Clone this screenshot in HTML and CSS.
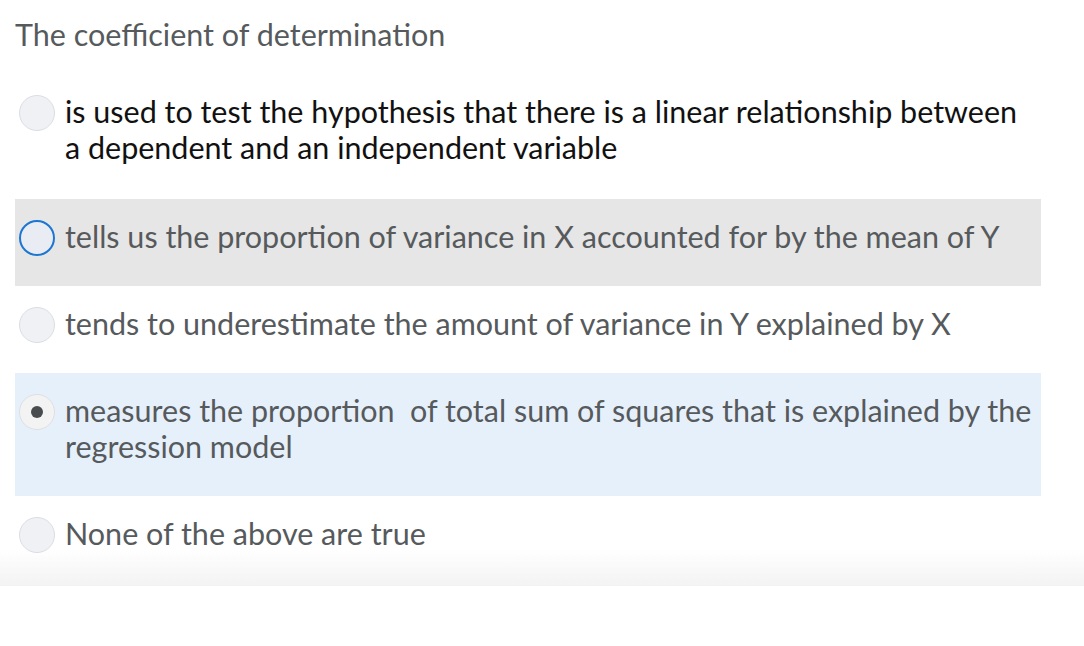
FILE: index.html
```html
<!DOCTYPE html>
<html lang="en">
<head>
<meta charset="utf-8">
<title>Quiz question</title>
<link rel="stylesheet" href="styles.css">
</head>
<body>
<div class="question">
  <h1 class="prompt">The coefficient of determination</h1>
  <ul class="options">
    <li class="option option-dark">
      <span class="radio"></span>
      <span class="label">is used to test the hypothesis that there is a linear relationship between a dependent and an independent variable</span>
    </li>
    <li class="option option-hover">
      <span class="radio radio-focus"></span>
      <span class="label">tells us the proportion of variance in X accounted for by the mean of Y</span>
    </li>
    <li class="option">
      <span class="radio"></span>
      <span class="label">tends to underestimate the amount of variance in Y explained by X</span>
    </li>
    <li class="option option-selected">
      <span class="radio radio-checked"></span>
      <span class="label">measures the proportion&nbsp; of total sum of squares that is explained by the regression model</span>
    </li>
    <li class="option option-last">
      <span class="radio"></span>
      <span class="label">None of the above are true</span>
    </li>
  </ul>
</div>
</body>
</html>
```
FILE: styles.css
```css
html, body {
  margin: 0;
  padding: 0;
  background: #ffffff;
}

body {
  font-family: Lato, "Open Sans", "Liberation Sans", sans-serif;
  color: #565a5c;
}

.question {
  width: 1084px;
}

.prompt {
  margin: 0;
  padding: 16px 15px 0 15px;
  height: 58px;
  font-size: 30.5px;
  line-height: 36px;
  font-weight: 400;
  color: #565a5c;
}

.options {
  list-style: none;
  margin: 0;
  padding: 0;
}

.option {
  display: flex;
  align-items: flex-start;
  gap: 10px;
  width: 1026px;
  box-sizing: border-box;
  margin-left: 15px;
  padding: 19px 4px 32px 4px;
  font-size: 30.5px;
  line-height: 36px;
  color: #565a5c;
}

.option-dark {
  color: #111111;
  padding-bottom: 34px;
}

.option-hover {
  background: #e6e6e6;
}

.option-selected {
  background: #e6f0fb;
}

.option-last {
  width: 1084px;
  margin-left: 0;
  padding-left: 19px;
  padding-bottom: 35px;
  background: linear-gradient(to bottom, #ffffff 0, #ffffff 53px, #f3f3f3 90px);
}

.radio {
  flex: none;
  position: relative;
  width: 36px;
  height: 36px;
  margin-top: 2px;
  margin-bottom: -2px;
  box-sizing: border-box;
  border-radius: 50%;
  border: 1.5px solid #dadde3;
  background: #eff1f5;
}

.radio-focus {
  border: 2.5px solid #1c76d2;
  background: #e9ecf3;
}

.radio-checked {
  background: #f3f3f4;
  border-color: #dedfe2;
}

.radio-checked::after {
  content: "";
  position: absolute;
  left: 10.5px;
  top: 10.5px;
  width: 12px;
  height: 12px;
  border-radius: 50%;
  background: #494c4e;
}

.label {
  flex: 1;
}
```
